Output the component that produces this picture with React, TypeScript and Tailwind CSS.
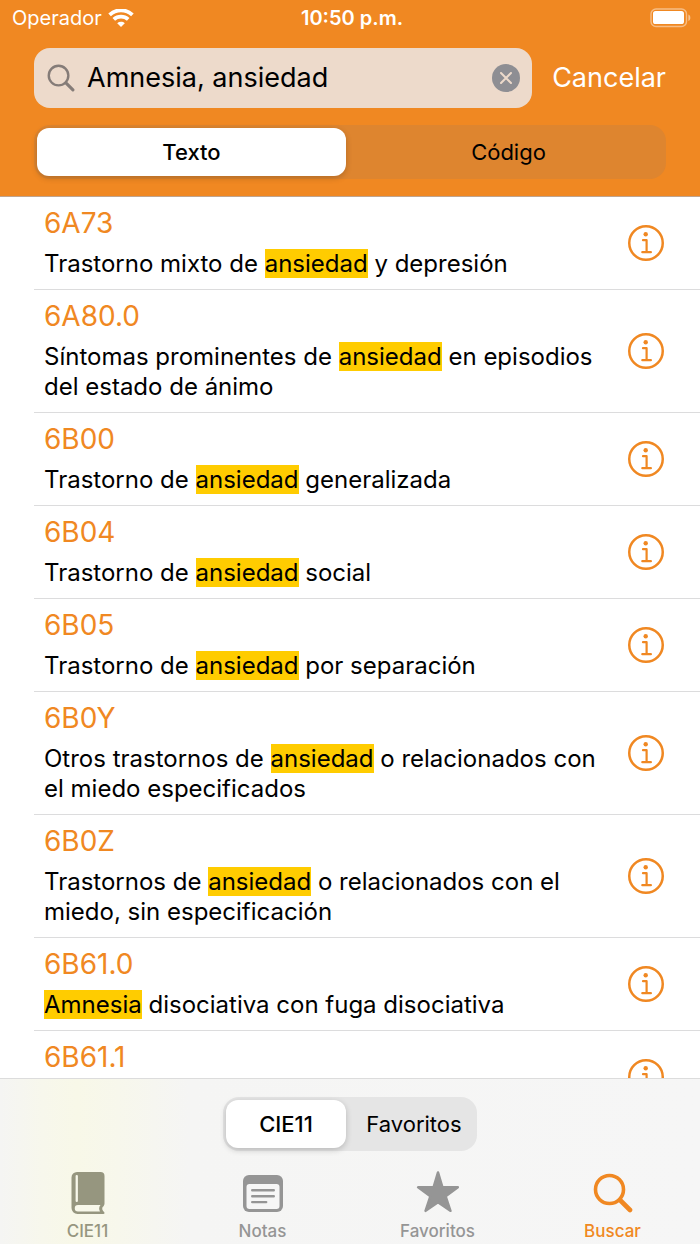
import { Fragment, useState } from "react";
import type { ReactNode } from "react";
import clsx from "clsx";

type Result = { code: string; title?: string };

const results: Result[] = [
  { code: "6A73", title: "Trastorno mixto de ansiedad y depresión" },
  { code: "6A80.0", title: "Síntomas prominentes de ansiedad en episodios del estado de ánimo" },
  { code: "6B00", title: "Trastorno de ansiedad generalizada" },
  { code: "6B04", title: "Trastorno de ansiedad social" },
  { code: "6B05", title: "Trastorno de ansiedad por separación" },
  { code: "6B0Y", title: "Otros trastornos de ansiedad o relacionados con el miedo especificados" },
  { code: "6B0Z", title: "Trastornos de ansiedad o relacionados con el miedo, sin especificación" },
  { code: "6B61.0", title: "Amnesia disociativa con fuga disociativa" },
  { code: "6B61.1" },
];

function WifiIcon() {
  return (
    <svg width="26" height="19" viewBox="0 0 26 19" fill="none" stroke="currentColor" strokeWidth="3.8" aria-hidden="true">
      <path d="M1.6 5.8C8-.2 18-.2 24.4 5.8" />
      <path d="M5.8 10.4C9.9 6.7 16.1 6.7 20.2 10.4" />
      <path d="M13 18 9.2 14.2C11.4 12.4 14.6 12.4 16.8 14.2Z" fill="currentColor" stroke="none" />
    </svg>
  );
}

function BatteryIcon() {
  return (
    <svg width="42" height="20" viewBox="0 0 42 20" aria-hidden="true">
      <rect x="1" y="1" width="35.5" height="17.5" rx="5" fill="none" stroke="#fff" strokeOpacity=".45" strokeWidth="1.4" />
      <rect x="3" y="3" width="31" height="13" rx="2.6" fill="#fff" />
      <path d="M38.4 6.4c2.6 1.2 2.6 5.4 0 6.6Z" fill="#fff" fillOpacity=".5" />
    </svg>
  );
}

function InfoIcon() {
  return (
    <svg width="36" height="36" viewBox="0 0 36 36" fill="none" stroke="currentColor" strokeWidth="2.5" aria-hidden="true">
      <circle cx="18" cy="18" r="16.75" />
      <circle cx="17.7" cy="9.3" r="2.2" fill="currentColor" stroke="none" />
      <path d="M15 15.2h3.6v12M14.3 27.2h8.6" strokeWidth="2.2" strokeLinecap="round" strokeLinejoin="round" />
    </svg>
  );
}

function BookIcon() {
  return (
    <svg width="36" height="44" viewBox="0 0 36 44" aria-hidden="true">
      <path
        d="M7 1h23.5a4 4 0 0 1 4 4v27.5c0 1.6-.8 2.8-1.9 3.6-.7 1.6-.4 3.4 1.2 4.6 1.2 1 .9 2.3-.5 2.3H7.5a6 6 0 0 1-6-6V6.5A5.5 5.5 0 0 1 7 1Z"
        fill="currentColor"
      />
      <rect x="5.6" y="4" width="2.3" height="27" rx="1.1" fill="#f8f8ea" />
      <path d="M8 34h22.5c-1.7 2.1-1.7 4.3-.5 6.5H8a3.25 3.25 0 0 1 0-6.5Z" fill="#f8f8ea" />
    </svg>
  );
}

function NotesIcon() {
  return (
    <svg width="40" height="44" viewBox="0 0 40 44" fill="none" aria-hidden="true">
      <rect x="0" y="4" width="40" height="37" rx="6" fill="currentColor" />
      <rect x="3.5" y="13" width="33" height="25" rx="3" fill="#f6f6f6" />
      <path d="M9.2 19.3h21.6M9.2 25.2h21.6M9.2 31.1h14" stroke="currentColor" strokeWidth="2.4" strokeLinecap="round" />
    </svg>
  );
}

function StarIcon() {
  return (
    <svg width="44" height="44" viewBox="0 0 44 44" aria-hidden="true">
      <path
        d="M22 1.5 26.3 16.2H41.8L29.6 25.3 34.4 39.8 22 31.2 9.6 39.8 14.4 25.3 2.2 16.2H17.7Z"
        fill="currentColor"
        stroke="currentColor"
        strokeWidth="2.6"
        strokeLinejoin="round"
      />
    </svg>
  );
}

function SearchIcon({ className, strokeWidth }: { className: string; strokeWidth: number }) {
  return (
    <svg className={className} viewBox="0 0 40 40" fill="none" stroke="currentColor" strokeWidth={strokeWidth} strokeLinecap="round" aria-hidden="true">
      <circle cx="16.5" cy="16.5" r="14" />
      <path d="M27 27 37 37" strokeWidth={strokeWidth + 1} />
    </svg>
  );
}

const tabs: { label: string; icon: ReactNode; color: string }[] = [
  { label: "CIE11", icon: <BookIcon />, color: "text-[#96967f]" },
  { label: "Notas", icon: <NotesIcon />, color: "text-[#959595]" },
  { label: "Favoritos", icon: <StarIcon />, color: "text-[#959595]" },
  { label: "Buscar", icon: <SearchIcon className="size-10" strokeWidth={3.6} />, color: "text-[#f08822]" },
];

function Segmented({ options, className }: { options: string[]; className: string }) {
  const [active, setActive] = useState(options[0]);

  return (
    <div role="group" className={clsx("flex h-[54px] gap-2 rounded-2xl p-[3px] text-[22px]", className)}>
      {options.map((option) => (
        <button
          key={option}
          type="button"
          aria-pressed={option === active}
          onClick={() => setActive(option)}
          className={clsx(
            "flex-1 rounded-xl text-black",
            option === active ? "bg-white font-medium shadow-[0_2px_6px_rgba(0,0,0,0.2)]" : "font-normal",
          )}
        >
          {option}
        </button>
      ))}
    </div>
  );
}

function Highlighted({ text, terms }: { text: string; terms: string[] }) {
  if (terms.length === 0) return <>{text}</>;
  const parts = text.split(new RegExp(`(${terms.join("|")})`, "i"));

  return (
    <>
      {parts.map((part, i) =>
        i % 2 === 1 ? (
          <mark key={i} className="bg-[#ffcc00] text-black">
            {part}
          </mark>
        ) : (
          <Fragment key={i}>{part}</Fragment>
        ),
      )}
    </>
  );
}

export default function App() {
  const [query, setQuery] = useState("Amnesia, ansiedad");
  const terms = query
    .split(",")
    .map((term) => term.trim().replace(/[^\p{L}\p{N} ]/gu, ""))
    .filter(Boolean);

  return (
    <div className="flex h-screen flex-col bg-white font-['Inter','Liberation_Sans',sans-serif] text-black">
      <header className="border-b border-[#bfa48f] bg-[#f08822] pb-[17px] text-white">
        <div className="grid h-9 grid-cols-3 items-center pr-2 pl-3 text-xl">
          <div className="flex items-center gap-1.5">
            <span>Operador</span>
            <WifiIcon />
          </div>
          <span className="text-center font-semibold">10:50 p.m.</span>
          <div className="flex justify-end">
            <BatteryIcon />
          </div>
        </div>

        <div className="mt-3 flex items-center gap-5 px-[34px]">
          <label className="flex h-[60px] min-w-0 flex-1 items-center gap-3 rounded-2xl bg-[#eddacb] pr-3 pl-[13px]">
            <SearchIcon className="size-7 shrink-0 text-[#857c78]" strokeWidth={3.4} />
            <input
              aria-label="Buscar"
              value={query}
              onChange={(e) => setQuery(e.target.value)}
              className="min-w-0 flex-1 bg-transparent text-[27px] text-black outline-none"
            />
            <button
              type="button"
              aria-label="Borrar"
              onClick={() => setQuery("")}
              className="flex size-7 shrink-0 items-center justify-center rounded-full bg-[#8e8e93] text-[#eddacb]"
            >
              <svg width="12" height="12" viewBox="0 0 12 12" stroke="currentColor" strokeWidth="2" strokeLinecap="round" aria-hidden="true">
                <path d="M1 1 11 11M11 1 1 11" />
              </svg>
            </button>
          </label>
          <button type="button" className="text-[27px]">
            Cancelar
          </button>
        </div>

        <div className="mt-[17px] px-[34px]">
          <Segmented options={["Texto", "Código"]} className="bg-[#de852f]" />
        </div>
      </header>

      <main className="min-h-0 flex-1 overflow-y-auto [scrollbar-width:none]">
        <ul>
          {results.map((result) => (
            <li key={result.code} className="ml-[34px] flex items-center justify-between border-b border-[#dcdcdd] pr-9 pb-[10px] pl-[10px]">
              <div className="min-w-0 flex-1 pt-2 pr-4">
                <p className="text-[28px] leading-9 text-[#f08822]">{result.code}</p>
                <p className="mt-2 min-h-[30px] text-2xl leading-[30px]">
                  {result.title && <Highlighted text={result.title} terms={terms} />}
                </p>
              </div>
              <button type="button" aria-label={`Información de ${result.code}`} className="mt-[10px] shrink-0 text-[#f08822]">
                <InfoIcon />
              </button>
            </li>
          ))}
        </ul>
      </main>

      <footer className="border-t border-[#dcdcdc] bg-[linear-gradient(90deg,#f5f5f3_0%,#f7f7ec_6%,#f8f8e8_11%,#f7f7ec_17%,#f5f5f4_27%,#f6f6f6_100%)] pt-[18px]">
        <div className="flex justify-center">
          <Segmented options={["CIE11", "Favoritos"]} className="w-[254px] bg-[#e5e5e5]" />
        </div>
        <nav className="mt-5 grid grid-cols-4 pb-[3px]">
          {tabs.map((tab) => (
            <a key={tab.label} href={`#${tab.label.toLowerCase()}`} className={clsx("flex flex-col items-center gap-1.5 text-[17px] leading-5 font-medium", tab.color)}>
              <span className="flex h-11 items-center">{tab.icon}</span>
              <span>{tab.label}</span>
            </a>
          ))}
        </nav>
      </footer>
    </div>
  );
}
